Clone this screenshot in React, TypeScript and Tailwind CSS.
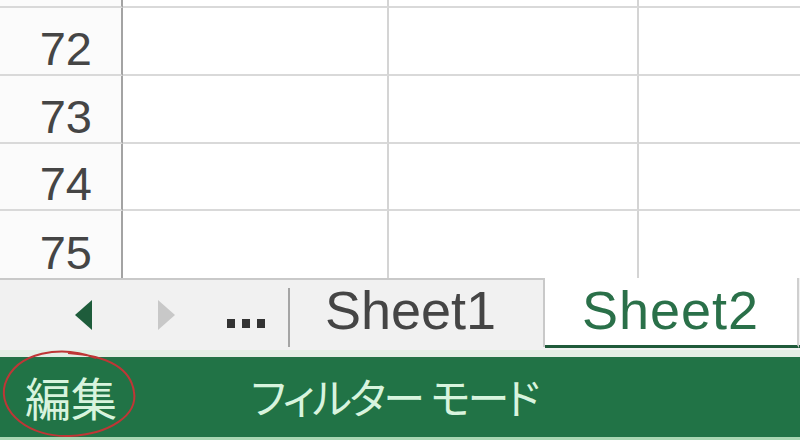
import React from 'react';

const rows = ['72', '73', '74', '75'];

function GridRow({ label, h, last }: { label?: string; h: string; last?: boolean }) {
  const line = last ? '' : 'border-b-2 border-b-[#d9d9d9]';
  return (
    <div className={`flex ${h}`}>
      <div
        className={`w-[123px] shrink-0 bg-[#fbfbfb] border-r-2 border-r-[#a3a3a3] flex items-end justify-end pr-[29px] pb-[2px] text-[47px] leading-none text-[#454545] ${line}`}
      >
        {label}
      </div>
      <div className={`w-[266px] shrink-0 border-r-2 border-r-[#d4d4d4] ${line}`} />
      <div className={`w-[250px] shrink-0 border-r-2 border-r-[#d4d4d4] ${line}`} />
      <div className={`flex-1 ${line}`} />
    </div>
  );
}

export default function App() {
  return (
    <div
      className="relative w-[800px] h-[440px] overflow-hidden bg-white flex flex-col"
      style={{ fontFamily: '"Liberation Sans", "Noto Sans CJK JP", sans-serif' }}
    >
      {/* Cells */}
      <GridRow h="h-[8px]" />
      {rows.map((r, i) => (
        <GridRow key={r} label={r} h={i < 2 ? 'h-[68px]' : 'h-[67px]'} last={i === rows.length - 1} />
      ))}

      {/* Sheet tabs */}
      <div className="flex h-[72px] bg-[#f1f1f1]">
        <div className="w-[288px] shrink-0 flex items-center border-t-2 border-[#c9c9c9]">
          <svg width="18" height="30" viewBox="0 0 18 30" className="ml-[75px]">
            <polygon points="0,15 17,0 17,30" fill="#1e5c3b" />
          </svg>
          <svg width="17" height="30" viewBox="0 0 17 30" className="ml-[65px]">
            <polygon points="0,0 17,15 0,30" fill="#c8c8c8" />
          </svg>
          <div className="ml-[52px] mt-[16px] flex gap-[7px]">
            <span className="w-[8px] h-[9px] bg-[#333]" />
            <span className="w-[8px] h-[9px] bg-[#333]" />
            <span className="w-[8px] h-[9px] bg-[#333]" />
          </div>
        </div>
        <div className="w-[2px] shrink-0 border-t-2 border-[#c9c9c9] flex flex-col">
          <div className="mt-[8px] h-[59px] bg-[#a5a5a5]" />
        </div>
        <div className="w-[255px] shrink-0 border-t-2 border-r-2 border-[#c9c9c9] pl-[35px] pt-[3px] text-[54px] leading-none text-[#454545] h-[69px]">
          Sheet1
        </div>
        <div className="w-[254px] shrink-0 bg-white border-r-2 border-[#cfcfcf] border-b-[3px] border-b-[#1f5a3a] h-[70px] pl-[37px] pt-[5px] text-[54px] leading-none tracking-[1px] text-[#2a7049]">
          Sheet2
        </div>
        <div className="flex-1 h-[70px] border-b-[3px] border-[#1f5a3a]" />
      </div>
      <div className="h-[7px] bg-[#e3efe5]" />

      {/* Status bar */}
      <div className="h-[80px] bg-[#217346] flex items-center pt-[6px] text-[#d8f4de]">
        <span className="ml-[25px] text-[46px] leading-none">編集</span>
        <span className="ml-[134px] text-[42px] leading-none tracking-[-2.5px] [font-feature-settings:'palt']">フィルター</span>
        <span className="ml-[8px] text-[42px] leading-none tracking-[-2.5px] [font-feature-settings:'palt']">モード</span>
      </div>
      <div className="flex-1 bg-[#a9d7b3]" />

      {/* Hand-drawn red mark around the mode */}
      <svg className="absolute inset-0 pointer-events-none" width="800" height="440" viewBox="0 0 800 440">
        <path
          d="M 96 358 C 62 345, 16 351, 5 384 C -3 412, 30 438, 70 436 C 110 434, 138 415, 134 392 C 131 370, 112 356, 68 353"
          fill="none"
          stroke="#bf3636"
          strokeWidth="2"
        />
      </svg>
    </div>
  );
}
